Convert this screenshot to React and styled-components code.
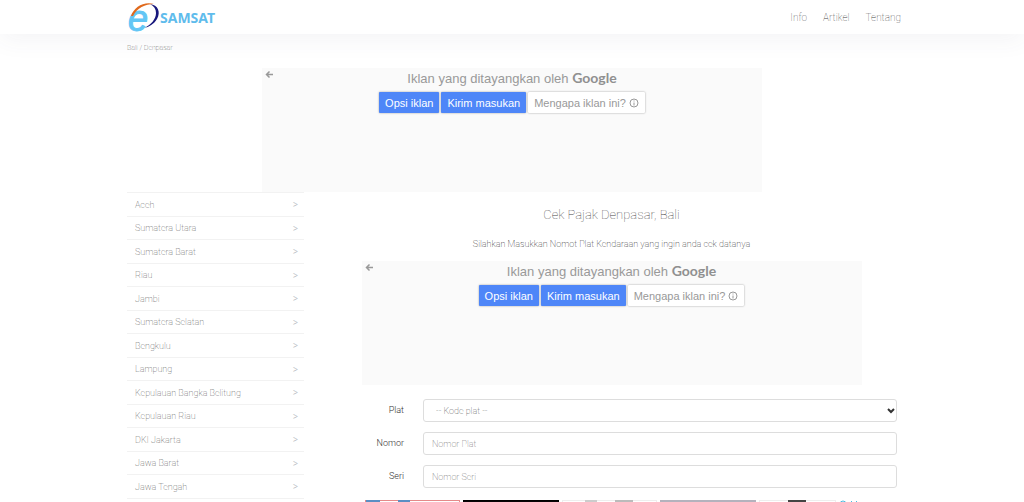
import React from "react";
import styled, { createGlobalStyle } from "styled-components";

const GlobalStyle = createGlobalStyle`
  * {
    box-sizing: border-box;
  }
  body {
    margin: 0;
    background: #fff;
    color: #444;
    font-family: Roboto, "Liberation Sans", sans-serif;
    font-size: 9px;
    font-weight: 100;
    overflow-x: hidden;
  }
  a {
    color: inherit;
    text-decoration: none;
  }
`;

const Header = styled.header`
  height: 34px;
  background: #fff;
  box-shadow: 0 6px 24px rgba(60, 70, 110, 0.06);
`;

const Container = styled.div`
  max-width: 802px;
  margin: 0 auto;
  padding: 0 16px;
`;

const HeaderInner = styled(Container)`
  height: 34px;
  padding: 0 12px 0 17px;
  display: flex;
  align-items: center;
  justify-content: space-between;
`;

const Brand = styled.a`
  display: flex;
  align-items: center;
`;

const BrandText = styled.span`
  color: #5fbcec;
  font-family: "Noto Sans", sans-serif;
  font-size: 14px;
  font-weight: 700;
`;

const LogoSvg = styled.svg`
  overflow: visible;
`;

const Nav = styled.nav`
  display: flex;
  gap: 16px;
  font-size: 10px;
`;

const Breadcrumb = styled.nav`
  padding: 8px 0 14px;
  font-size: 7px;
  line-height: 12px;
`;

const AdBox = styled.section`
  width: 100%;
  max-width: 500px;
  height: 124px;
  margin: 0 auto;
  position: relative;
  background: #fafafa;
  color: #999;
  font-family: "Liberation Sans", Arial, sans-serif;
  font-weight: 400;
  text-align: center;
`;

const AdBack = styled.button`
  position: absolute;
  top: 2px;
  left: 3px;
  width: 9px;
  height: 9px;
  padding: 0;
  border: 0;
  background: none;
  color: #999;
  svg {
    display: block;
  }
`;

const AdTitle = styled.div`
  padding-top: 1px;
  font-size: 13px;
  line-height: 18px;
`;

const GoogleMark = styled.span`
  color: #909090;
  font-family: Lato, sans-serif;
  font-size: 14px;
  font-weight: 700;
`;

const AdActions = styled.div`
  display: flex;
  justify-content: center;
  gap: 2px;
  margin-top: 4px;
`;

const AdButton = styled.button`
  display: flex;
  align-items: center;
  gap: 3px;
  height: 21px;
  padding: 0 6px;
  border: 0;
  border-radius: 1px;
  background: ${({ $plain }) => ($plain ? "#fff" : "#4e86f8")};
  color: ${({ $plain }) => ($plain ? "#999" : "#fff")};
  box-shadow: 0 0 2px rgba(0, 0, 0, 0.4);
  font-family: inherit;
  font-size: 11px;
`;

const Columns = styled.div`
  display: grid;
  grid-template-columns: 177px 1fr;
  gap: 22px;
`;

const RegionList = styled.ul`
  margin: 0;
  padding: 0;
  list-style: none;
  border-top: 1px solid #f2f2f2;
`;

const RegionItem = styled.li`
  height: 24px;
  border-bottom: 1px solid #f2f2f2;
  &:nth-child(even) {
    height: 23px;
  }
  a {
    display: flex;
    justify-content: space-between;
    align-items: center;
    height: 100%;
    padding: 0 6px 0 8px;
  }
  span {
    color: #b4b8c0;
    font-size: 10px;
    font-weight: 300;
  }
`;

const Main = styled.main`
  min-width: 0;
`;

const Title = styled.h1`
  margin: 0;
  padding-top: 13px;
  font-size: 13px;
  font-weight: 100;
  line-height: 20px;
  text-align: center;
`;

const Lead = styled.p`
  margin: 12px 0 10px;
  color: #000;
  line-height: 14px;
  text-align: center;
`;

const Form = styled.form`
  display: flex;
  flex-direction: column;
  gap: 10px;
  padding-top: 14px;
`;

const Field = styled.div`
  display: grid;
  grid-template-columns: 78px 1fr;
  gap: 19px;
  label {
    padding-top: 5px;
    color: #333;
    font-weight: 300;
    line-height: 12px;
    text-align: right;
  }
  input,
  select {
    width: 100%;
    height: 23px;
    padding: 0 8px;
    border: 1px solid #ddd;
    border-radius: 3px;
    background: #fff;
    color: #333;
    font: inherit;
  }
  input::placeholder {
    color: #555;
  }
`;

const SelectWrap = styled.div`
  position: relative;
  select {
    display: block;
    padding-left: 12px;
    appearance: none;
  }
  svg {
    position: absolute;
    top: 9px;
    right: 2px;
    pointer-events: none;
  }
`;

const Strip = styled.div`
  display: flex;
  gap: 3px;
  width: 100%;
  max-width: 494px;
  height: 64px;
  margin: 12px auto 0;
`;

const Thumb = styled.div`
  flex: ${({ $grow }) => $grow || 5};
  display: flex;
  justify-content: ${({ $align }) => $align || "center"};
  gap: 18px;
  border: 1px solid ${({ $edge }) => $edge || "#eee"};
  background: ${({ $fill }) => $fill || "#fff"};
`;

const Patch = styled.i`
  width: ${({ $w }) => $w}px;
  height: 20px;
  margin-top: -1px;
  background: ${({ $fill }) => $fill};
`;

const StripLinks = styled.div`
  width: 20px;
  color: #4bbbe0;
`;

const regions = [
  "Aceh",
  "Sumatera Utara",
  "Sumatera Barat",
  "Riau",
  "Jambi",
  "Sumatera Selatan",
  "Bengkulu",
  "Lampung",
  "Kepulauan Bangka Belitung",
  "Kepulauan Riau",
  "DKI Jakarta",
  "Jawa Barat",
  "Jawa Tengah",
];

function Logo() {
  return (
    <LogoSvg width="32" height="32" viewBox="0 0 32 32" aria-hidden="true">
      <path
        d="M22 3c8 1 11 8 7 15-3 5-8 8-13 9 7-3 12-9 12-15 0-4-2-7-6-9z"
        fill="#17177c"
      />
      <text
        x="0"
        y="30"
        fill="#62c6f5"
        stroke="#62c6f5"
        fontFamily="Liberation Sans"
        fontSize="36"
        fontStyle="italic"
        fontWeight="400"
      >
        e
      </text>
      <path d="M3 15C6 6 16 0 26 3 17 3 9 7 5 15z" fill="#e0691c" />
    </LogoSvg>
  );
}

function Ad() {
  return (
    <AdBox>
      <AdBack type="button" aria-label="Kembali">
        <svg width="9" height="9" viewBox="0 0 18 18" fill="none" stroke="currentColor" strokeWidth="3">
          <path d="M16 9H3M9 3L3 9l6 6" />
        </svg>
      </AdBack>
      <AdTitle>
        Iklan yang ditayangkan oleh <GoogleMark>Google</GoogleMark>
      </AdTitle>
      <AdActions>
        <AdButton type="button">Opsi iklan</AdButton>
        <AdButton type="button">Kirim masukan</AdButton>
        <AdButton type="button" $plain>
          Mengapa iklan ini?
          <svg width="10" height="10" viewBox="0 0 20 20" fill="none" stroke="#999" strokeWidth="2">
            <circle cx="10" cy="10" r="8" />
            <path d="M10 9v6M10 5v2" />
          </svg>
        </AdButton>
      </AdActions>
    </AdBox>
  );
}

function App() {
  return (
    <>
      <GlobalStyle />
      <Header>
        <HeaderInner>
          <Brand href="#">
            <Logo />
            <BrandText>SAMSAT</BrandText>
          </Brand>
          <Nav>
            <a href="#info">Info</a>
            <a href="#artikel">Artikel</a>
            <a href="#tentang">Tentang</a>
          </Nav>
        </HeaderInner>
      </Header>
      <Container>
        <Breadcrumb>
          <a href="#bali">Bali</a> / <a href="#denpasar">Denpasar</a>
        </Breadcrumb>
        <Ad />
        <Columns>
          <RegionList>
            {regions.map((name) => (
              <RegionItem key={name}>
                <a href="#region">
                  {name}
                  <span>&gt;</span>
                </a>
              </RegionItem>
            ))}
          </RegionList>
          <Main>
            <Title>Cek Pajak Denpasar, Bali</Title>
            <Lead>
              Silahkan Masukkan Nomot Plat Kendaraan yang ingin anda cek datanya
            </Lead>
            <Ad />
            <Form>
              <Field>
                <label htmlFor="plat">Plat</label>
                <SelectWrap>
                  <select id="plat">
                    <option>-- Kode plat --</option>
                  </select>
                  <svg width="8" height="6" viewBox="0 0 8 6" fill="none" stroke="#333" strokeWidth="2">
                    <path d="M1 1l3 3 3-3" />
                  </svg>
                </SelectWrap>
              </Field>
              <Field>
                <label htmlFor="nomor">Nomor</label>
                <input id="nomor" placeholder="Nomor Plat" />
              </Field>
              <Field>
                <label htmlFor="seri">Seri</label>
                <input id="seri" placeholder="Nomor Seri" />
              </Field>
            </Form>
            <Strip>
              <Thumb $edge="#e58a8a" $align="flex-start">
                <Patch $w={14} $fill="#5b8fc4" />
                <Patch $w={12} $fill="#5b8fc4" />
              </Thumb>
              <Thumb $edge="#000" $fill="#080406" />
              <Thumb>
                <Patch $w={12} $fill="#ccc" />
                <Patch $w={18} $fill="#bbb" />
              </Thumb>
              <Thumb $edge="#b4b2bd" $fill="#b4b2bd" />
              <Thumb $grow={4}>
                <Patch $w={18} $fill="#444" />
              </Thumb>
              <StripLinks>
                <svg width="20" height="9" viewBox="0 0 20 9" fill="none" stroke="currentColor">
                  <circle cx="4" cy="4" r="3" />
                  <path d="M12 1l6 6M18 1l-6 6" />
                </svg>
              </StripLinks>
            </Strip>
          </Main>
        </Columns>
      </Container>
    </>
  );
}

export default App;
